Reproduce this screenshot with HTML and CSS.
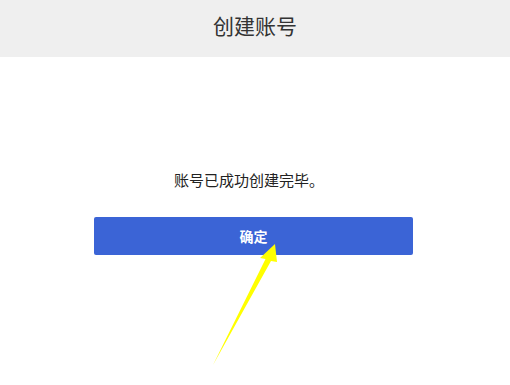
FILE: index.html
```html
<!DOCTYPE html>
<html lang="zh-CN">
<head>
<meta charset="utf-8">
<title>创建账号</title>
<link rel="stylesheet" href="styles.css">
</head>
<body>
<header class="topbar">
  <h1 class="title">创建账号</h1>
</header>
<main class="content">
  <p class="message">账号已成功创建完毕。</p>
  <button class="confirm" type="button">确定</button>
</main>
<svg class="arrow" width="510" height="385" viewBox="0 0 510 385" aria-hidden="true">
  <polygon points="275,244 260,258 265.5,259 213,365 271,261 277,262" fill="#ffff00"/>
</svg>
</body>
</html>
```
FILE: styles.css
```css
html, body {
  margin: 0;
  padding: 0;
  background: #ffffff;
  font-family: "Noto Sans CJK SC", "Noto Sans", "Liberation Sans", sans-serif;
}
body {
  position: relative;
  width: 510px;
  height: 385px;
  overflow: hidden;
}
.topbar {
  height: 57px;
  background: #efefef;
  display: flex;
  align-items: center;
  justify-content: center;
}
.title {
  margin: 0;
  font-size: 21px;
  font-weight: normal;
  color: #333333;
  line-height: 24px;
  padding-bottom: 8px;
}
.content {
  display: flex;
  flex-direction: column;
  align-items: center;
  padding-top: 113px;
  padding-right: 3px;
}
.message {
  margin: 0;
  padding-right: 9px;
  font-size: 15px;
  line-height: 20px;
  color: #222222;
}
.confirm {
  margin-top: 27px;
  width: 319px;
  height: 38px;
  border: none;
  border-radius: 2px;
  background: #3b64d6;
  color: #ffffff;
  font-family: inherit;
  font-size: 14px;
  font-weight: bold;
  padding: 0;
}
.arrow {
  position: absolute;
  left: 0;
  top: 0;
  pointer-events: none;
}
```
